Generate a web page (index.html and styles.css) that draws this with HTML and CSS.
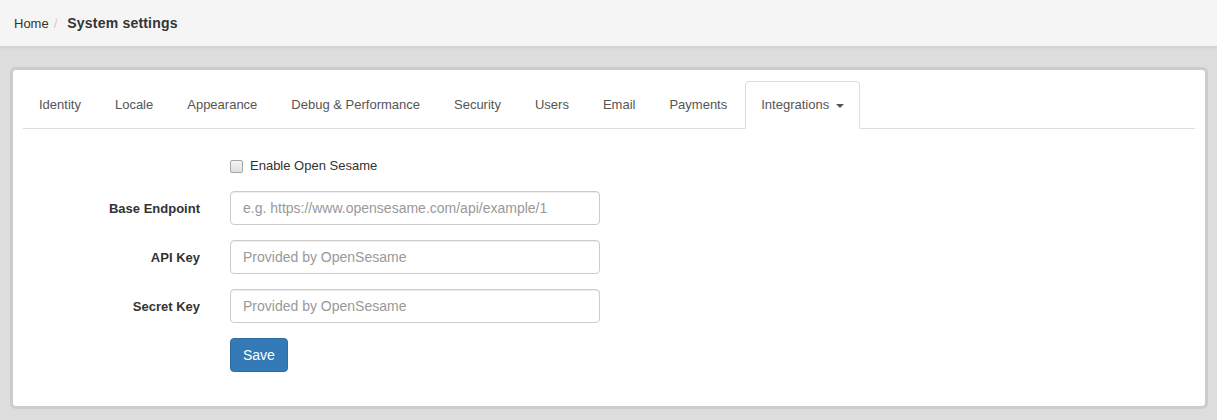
FILE: index.html
```html
<!DOCTYPE html>
<html lang="en">
<head>
    <meta charset="UTF-8">
    <meta name="viewport" content="width=device-width, initial-scale=1.0">
    <title>System settings</title>
    <link rel="stylesheet" href="styles.css">
</head>
<body>
    <div class="page-header">
        <a href="#" class="crumb">Home</a>
        <span class="crumb-sep">/</span>
        <span class="crumb-current">System settings</span>
    </div>

    <div class="panel">
        <ul class="nav-tabs">
            <li><a href="#">Identity</a></li>
            <li><a href="#">Locale</a></li>
            <li><a href="#">Appearance</a></li>
            <li><a href="#">Debug &amp; Performance</a></li>
            <li><a href="#">Security</a></li>
            <li><a href="#">Users</a></li>
            <li><a href="#">Email</a></li>
            <li><a href="#">Payments</a></li>
            <li class="active"><a href="#">Integrations <span class="caret"></span></a></li>
        </ul>

        <form class="settings-form">
            <div class="form-row">
                <div></div>
                <label class="check-label"><span class="check-box"></span>Enable Open Sesame</label>
            </div>
            <div class="form-row">
                <label class="row-label">Base Endpoint</label>
                <input type="text" class="form-control" placeholder="e.g. https://www.opensesame.com/api/example/1">
            </div>
            <div class="form-row">
                <label class="row-label">API Key</label>
                <input type="text" class="form-control" placeholder="Provided by OpenSesame">
            </div>
            <div class="form-row">
                <label class="row-label">Secret Key</label>
                <input type="text" class="form-control" placeholder="Provided by OpenSesame">
            </div>
            <div class="form-row">
                <div></div>
                <div><button type="button" class="btn btn-primary">Save</button></div>
            </div>
        </form>
    </div>
</body>
</html>
```

FILE: styles.css
```css
body {
    font-family: Arial, "Liberation Sans", sans-serif;
    font-size: 13px;
    color: #333;
    margin: 0;
    background-color: #dddddd;
}
.page-header {
    height: 46px;
    background: #f5f5f5;
    border-bottom: 1px solid #d2d2d2;
    box-shadow: 0 1px 2px rgba(0,0,0,0.06);
    display: flex;
    align-items: center;
    padding: 0 14px;
}
.crumb {
    color: #333;
    text-decoration: none;
    font-size: 13px;
}
.crumb-sep {
    color: #ccc;
    margin: 0 10px 0 5px;
}
.crumb-current {
    font-weight: bold;
    font-size: 14px;
    color: #333;
    letter-spacing: 0.2px;
}
.panel {
    margin: 20px 9px 10px 10px;
    background: white;
    border: 3px solid #cccccc;
    border-radius: 6px;
    padding: 11px 10px 19px;
}
.nav-tabs {
    list-style: none;
    margin: 0;
    padding: 0;
    display: flex;
    border-bottom: 1px solid #ddd;
}
.nav-tabs li {
    margin-right: 2px;
    margin-bottom: -1px;
}
.nav-tabs a {
    display: block;
    padding: 14px 15px;
    line-height: 18px;
    color: #555;
    text-decoration: none;
    border: 1px solid transparent;
    border-radius: 4px 4px 0 0;
}
.nav-tabs li.active a {
    border-color: #ddd;
    border-bottom-color: white;
    background: white;
}
.caret {
    display: inline-block;
    width: 0;
    height: 0;
    margin-left: 3px;
    vertical-align: middle;
    border-top: 4px solid #555;
    border-left: 4px solid transparent;
    border-right: 4px solid transparent;
}
.settings-form {
    padding-top: 27px;
}
.form-row {
    display: grid;
    grid-template-columns: 177px 370px;
    column-gap: 30px;
    align-items: center;
    margin-bottom: 15px;
}
.row-label {
    text-align: right;
    font-weight: bold;
    font-size: 13px;
    color: #333;
}
.check-label {
    display: flex;
    align-items: center;
    line-height: 20px;
    color: #333;
}
.check-box {
    width: 11px;
    height: 11px;
    border: 1px solid #a6a6a6;
    border-radius: 2px;
    background: linear-gradient(#f4f4f4, #dedede);
    margin-right: 7px;
}
.form-control {
    box-sizing: border-box;
    height: 34px;
    width: 370px;
    padding: 6px 12px;
    font-family: Arial, "Liberation Sans", sans-serif;
    font-size: 14px;
    color: #555;
    border: 1px solid #ccc;
    border-radius: 4px;
    box-shadow: inset 0 1px 1px rgba(0,0,0,0.075);
}
.form-control::placeholder {
    color: #999;
}
.btn {
    height: 34px;
    padding: 6px 12px;
    border-radius: 4px;
    font-family: Arial, "Liberation Sans", sans-serif;
    font-size: 14px;
    cursor: pointer;
}
.btn-primary {
    background-color: #337ab7;
    border: 1px solid #2e6da4;
    color: white;
}
```
